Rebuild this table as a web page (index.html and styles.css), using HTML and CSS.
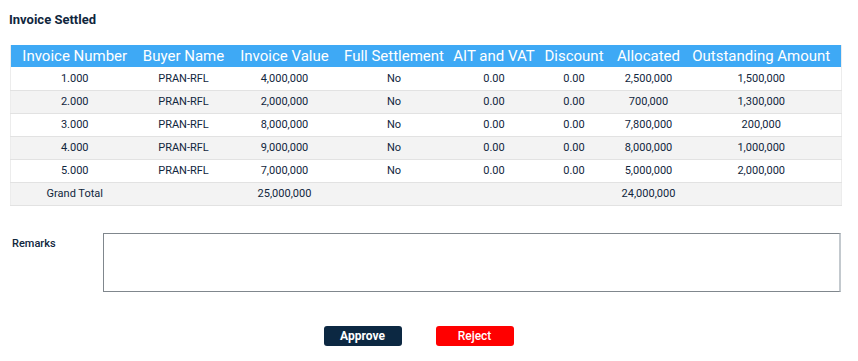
FILE: index.html
```html
<!DOCTYPE html>
<html>
<head>
<meta charset="utf-8">
<link rel="stylesheet" href="styles.css">
</head>
<body>
<div class="page">
  <h1 class="title">Invoice Settled</h1>
  <table class="grid">
    <colgroup>
      <col class="c1"><col class="c2"><col class="c3"><col class="c4"><col class="c5"><col class="c6"><col class="c7"><col class="c8">
    </colgroup>
    <thead>
      <tr>
        <th>Invoice Number</th><th>Buyer Name</th><th>Invoice Value</th><th>Full Settlement</th><th>AIT and VAT</th><th>Discount</th><th>Allocated</th><th class="last">Outstanding Amount</th>
      </tr>
    </thead>
    <tbody>
      <tr><td>1.000</td><td>PRAN-RFL</td><td>4,000,000</td><td>No</td><td>0.00</td><td>0.00</td><td>2,500,000</td><td class="last">1,500,000</td></tr>
      <tr><td>2.000</td><td>PRAN-RFL</td><td>2,000,000</td><td>No</td><td>0.00</td><td>0.00</td><td>700,000</td><td class="last">1,300,000</td></tr>
      <tr><td>3.000</td><td>PRAN-RFL</td><td>8,000,000</td><td>No</td><td>0.00</td><td>0.00</td><td>7,800,000</td><td class="last">200,000</td></tr>
      <tr><td>4.000</td><td>PRAN-RFL</td><td>9,000,000</td><td>No</td><td>0.00</td><td>0.00</td><td>8,000,000</td><td class="last">1,000,000</td></tr>
      <tr><td>5.000</td><td>PRAN-RFL</td><td>7,000,000</td><td>No</td><td>0.00</td><td>0.00</td><td>5,000,000</td><td class="last">2,000,000</td></tr>
      <tr><td>Grand Total</td><td></td><td>25,000,000</td><td></td><td></td><td></td><td>24,000,000</td><td class="last"></td></tr>
    </tbody>
  </table>
  <div class="remarks">
    <label class="remarks-label" for="remarks">Remarks</label>
    <textarea id="remarks" class="remarks-box"></textarea>
  </div>
  <div class="actions">
    <button class="btn btn-approve">Approve</button>
    <button class="btn btn-reject">Reject</button>
  </div>
</div>
</body>
</html>
```

FILE: styles.css
```css
* { box-sizing: border-box; }
html, body { margin: 0; padding: 0; background: #ffffff; }
body {
  font-family: Roboto, "Liberation Sans", Arial, sans-serif;
  color: #10263d;
}
.page {
  width: 841px;
  padding: 12px 0 0 10px;
}
.title {
  margin: 0 0 0 -1px;
  font-size: 13px;
  font-weight: 700;
  line-height: 15px;
  color: #10263d;
}
.grid {
  margin-top: 18px;
  width: 831px;
  table-layout: fixed;
  border-collapse: collapse;
  border-left: 1px solid #ececec;
  border-right: 1px solid #ececec;
}
.c1 { width: 128px; }
.c2 { width: 90px; }
.c3 { width: 112px; }
.c4 { width: 107px; }
.c5 { width: 93px; }
.c6 { width: 67px; }
.c7 { width: 82px; }
.c8 { width: 152px; }
.grid th {
  background: #3ea9f5;
  color: #ffffff;
  font-weight: 400;
  font-size: 15px;
  height: 22px;
  padding: 0;
  white-space: nowrap;
  text-align: center;
  line-height: 21px;
}
.grid td {
  font-size: 11px;
  height: 23px;
  padding: 0;
  text-align: center;
  white-space: nowrap;
  border-bottom: 1px solid #e2e2e2;
  color: #10263d;
}
.grid .last { padding-right: 8px; }
.grid tbody tr:nth-child(even) td { background: #f3f3f3; }
.remarks {
  display: flex;
  margin-top: 27px;
}
.remarks-label {
  width: 93px;
  padding: 4px 0 0 2px;
  font-size: 11px;
  font-weight: 500;
  color: #10263d;
}
.remarks-box {
  width: 739px;
  height: 59px;
  border: 1px solid #80878d;
  border-right: 2px solid #c3c9ce;
  resize: none;
  margin: 0;
  padding: 2px;
  font-family: inherit;
}
.actions {
  display: flex;
  justify-content: center;
  gap: 34px;
  margin-top: 34px;
  padding-right: 14px;
}
.btn {
  width: 78px;
  height: 20px;
  border: none;
  border-radius: 3px;
  color: #ffffff;
  font-family: inherit;
  font-size: 12px;
  padding: 0;
  line-height: 20px;
}
.btn-approve { background: #0c2842; font-weight: 700; }
.btn-reject { background: #ff0000; font-weight: 500; }
```
